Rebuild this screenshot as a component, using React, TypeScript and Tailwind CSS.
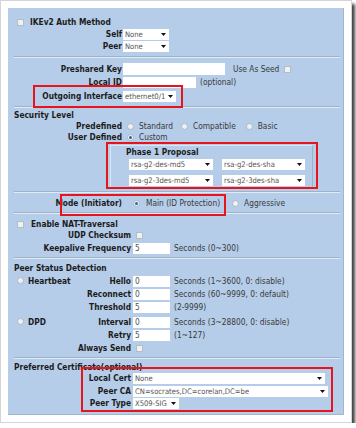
import type { ReactNode } from 'react';

const Arrow = () => (
  <svg width="5" height="3" viewBox="0 0 5 3" className="shrink-0">
    <polygon points="0,0 5,0 2.5,3" fill="#111" />
  </svg>
);

const Select = ({ value, cls }: { value: string; cls: string }) => (
  <div className={`${cls} h-[11px] bg-white flex items-center justify-between pl-[2px] pr-[3px] text-[#555] text-[7.6px] leading-[11px] font-normal shrink-0`}>
    <span className="overflow-hidden whitespace-nowrap">{value}</span>
    <Arrow />
  </div>
);

const Input = ({ value, cls }: { value?: string; cls: string }) => (
  <div className={`${cls} h-[11px] bg-white flex items-center pl-[2px] text-[#555] font-normal shrink-0`}>{value}</div>
);

const Checkbox = ({ cls = '' }: { cls?: string }) => (
  <span className={`${cls} block w-[7px] h-[7px] border border-[#b4bcc6] bg-[#eef1f4] shrink-0`} />
);

const Radio = ({ on = false, cls = '' }: { on?: boolean; cls?: string }) => (
  <span className={`${cls} w-[7px] h-[7px] rounded-full border border-[#aeb8c2] bg-[#eef1f4] flex items-center justify-center shrink-0`}>
    {on && <span className="w-[3px] h-[3px] rounded-full bg-[#2f63a3]" />}
  </span>
);

const Row = ({ cls, lw, label, children }: { cls: string; lw: string; label: ReactNode; children?: ReactNode }) => (
  <div className={`flex items-center ${cls}`}>
    <span className={`${lw} shrink-0 text-right font-bold text-[#1c1c1c] whitespace-nowrap`}>{label}</span>
    {children}
  </div>
);

const Sep = ({ cls }: { cls: string }) => (
  <div className={`${cls} border-t border-b border-t-[#9fb3c8] border-b-[#e2ecf6]`} />
);

const Note = ({ children, cls = 'ml-[4px]' }: { children: ReactNode; cls?: string }) => (
  <span className={`${cls} text-[#3a3a3a] font-normal whitespace-nowrap`}>{children}</span>
);

export default function App() {
  return (
    <div className="bg-white font-['DejaVu_Sans_Condensed','DejaVu_Sans',sans-serif] text-[8.3px] leading-none">
      <div className="w-[352px] border border-[#d4d4d4] bg-white p-[7px] shadow-[3px_4px_3px_rgba(0,0,0,0.75)]">
        <div className="relative h-[407px] bg-[#b5cde8] border-r border-b border-[#a3b7cb] pl-[6px] pr-[3px] pt-[8px]">
          {/* IKEv2 */}
          <div className="flex items-center h-[12px]">
            <Checkbox cls="ml-[3px]" />
            <span className="ml-[6px] font-bold text-[#1c1c1c]">IKEv2 Auth Method</span>
          </div>
          <Row cls="h-[12px]" lw="w-[108px]" label="Self">
            <Select value="None" cls="ml-[1px] w-[46px]" />
          </Row>
          <Row cls="h-[12px]" lw="w-[108px]" label="Peer">
            <Select value="None" cls="ml-[1px] w-[46px]" />
          </Row>
          <Sep cls="mt-[4px]" />

          <Row cls="mt-[5px] h-[12px]" lw="w-[108px]" label="Preshared Key">
            <Input cls="ml-[1px] w-[102px] h-[12px]" />
            <Note cls="ml-[8px]">Use As Seed</Note>
            <Checkbox cls="ml-[5px]" />
          </Row>
          <Row cls="mt-[1px] h-[12px]" lw="w-[108px]" label="Local ID">
            <Input cls="ml-[1px] w-[73px]" />
            <Note>(optional)</Note>
          </Row>
          <Row cls="mt-[2px] h-[12px]" lw="w-[108px]" label="Outgoing Interface">
            <Select value="ethernet0/1" cls="ml-[1px] w-[53px]" />
          </Row>
          <Sep cls="mt-[4px]" />

          {/* Security level */}
          <div className="mt-[2px] h-[11px] flex items-center font-bold text-[#1c1c1c]">Security Level</div>
          <Row cls="h-[11px]" lw="w-[108px]" label="Predefined">
            <Radio cls="ml-[5px]" />
            <Note cls="ml-[5px]">Standard</Note>
            <Radio cls="ml-[8px]" />
            <Note cls="ml-[5px]">Compatible</Note>
            <Radio cls="ml-[10px]" />
            <Note cls="ml-[5px]">Basic</Note>
          </Row>
          <Row cls="h-[11px]" lw="w-[108px]" label="User Defined">
            <Radio on cls="ml-[5px]" />
            <Note cls="ml-[5px]">Custom</Note>
          </Row>
          <div className="mt-[2px] ml-[96px] w-[203px] h-[43px] border border-[#dbe6f1] border-r-[#9fb3c8] border-b-[#9fb3c8] pt-[1px]">
            <div className="h-[10px] flex items-center ml-[15px] font-bold text-[#1c1c1c]">Phase 1 Proposal</div>
            <div className="mt-[2px] flex items-center ml-[18px] gap-[9px]">
              <Select value="rsa-g2-des-md5" cls="w-[84px]" />
              <Select value="rsa-g2-des-sha" cls="w-[83px]" />
            </div>
            <div className="mt-[5px] flex items-center ml-[18px] gap-[9px]">
              <Select value="rsa-g2-3des-md5" cls="w-[84px]" />
              <Select value="rsa-g2-3des-sha" cls="w-[83px]" />
            </div>
          </div>
          <Sep cls="mt-[3px]" />

          <Row cls="mt-[4px] h-[12px]" lw="w-[108px]" label="Mode (Initiator)">
            <Radio on cls="ml-[11px]" />
            <Note cls="ml-[6px]">Main (ID Protection)</Note>
            <Radio cls="ml-[12px]" />
            <Note cls="ml-[5px]">Aggressive</Note>
          </Row>
          <Sep cls="mt-[3px]" />

          {/* NAT */}
          <div className="mt-[5px] h-[11px] flex items-center">
            <Checkbox cls="ml-[3px]" />
            <span className="ml-[7px] font-bold text-[#1c1c1c]">Enable NAT-Traversal</span>
          </div>
          <Row cls="h-[11px]" lw="w-[117px]" label="UDP Checksum">
            <Checkbox cls="ml-[5px]" />
          </Row>
          <Row cls="mt-[1px] h-[12px]" lw="w-[117px]" label="Keepalive Frequency">
            <Input value="5" cls="ml-[2px] w-[37px]" />
            <Note>Seconds (0~300)</Note>
          </Row>
          <Sep cls="mt-[3px]" />

          {/* Peer status */}
          <div className="mt-[4px] h-[11px] flex items-center font-bold text-[#1c1c1c]">Peer Status Detection</div>
          <Row
            cls="mt-[1px] h-[12px]"
            lw="w-[117px]"
            label={
              <span className="flex items-center justify-between">
                <span className="flex items-center">
                  <Radio cls="ml-[3px]" />
                  <span className="ml-[4px]">Heartbeat</span>
                </span>
                <span>Hello</span>
              </span>
            }
          >
            <Input value="0" cls="ml-[2px] w-[37px]" />
            <Note>Seconds (1~3600, 0: disable)</Note>
          </Row>
          <Row cls="mt-[1px] h-[12px]" lw="w-[117px]" label="Reconnect">
            <Input value="0" cls="ml-[2px] w-[37px]" />
            <Note>Seconds (60~9999, 0: default)</Note>
          </Row>
          <Row cls="mt-[1px] h-[12px]" lw="w-[117px]" label="Threshold">
            <Input value="5" cls="ml-[2px] w-[37px]" />
            <Note>(2-9999)</Note>
          </Row>
          <Row
            cls="mt-[3px] h-[12px]"
            lw="w-[117px]"
            label={
              <span className="flex items-center justify-between">
                <span className="flex items-center">
                  <Radio cls="ml-[3px]" />
                  <span className="ml-[4px]">DPD</span>
                </span>
                <span>Interval</span>
              </span>
            }
          >
            <Input value="0" cls="ml-[2px] w-[37px]" />
            <Note>Seconds (3~28800, 0: disable)</Note>
          </Row>
          <Row cls="mt-[1px] h-[12px]" lw="w-[117px]" label="Retry">
            <Input value="5" cls="ml-[2px] w-[37px]" />
            <Note>(1~127)</Note>
          </Row>
          <Row cls="mt-[1px] h-[12px]" lw="w-[117px]" label="Always Send">
            <Checkbox cls="ml-[5px]" />
          </Row>
          <Sep cls="mt-[3px]" />

          {/* Certificate */}
          <div className="mt-[3px] h-[11px] flex items-center font-bold text-[#1c1c1c]">Preferred Certificate(optional)</div>
          <Row cls="h-[11px]" lw="w-[117px]" label="Local Cert">
            <Select value="None" cls="ml-[2px] w-[192px]" />
          </Row>
          <Row cls="mt-[1px] h-[12px]" lw="w-[117px]" label="Peer CA">
            <Select value="CN=socrates,DC=corelan,DC=be" cls="ml-[2px] w-[195px]" />
          </Row>
          <Row cls="h-[12px]" lw="w-[117px]" label="Peer Type">
            <Select value="X509-SIG" cls="ml-[2px] w-[46px]" />
          </Row>

          {/* annotation boxes */}
          <div className="absolute left-[25px] top-[77px] w-[150px] h-[23px] border-2 border-[#e8141c]" />
          <div className="absolute left-[98px] top-[134px] w-[212px] h-[47px] border-2 border-[#e8141c]" />
          <div className="absolute left-[52px] top-[186px] w-[166px] h-[22px] border-2 border-[#e8141c]" />
          <div className="absolute left-[73px] top-[359px] w-[252px] h-[45px] border-2 border-[#e8141c]" />
        </div>
      </div>
    </div>
  );
}
